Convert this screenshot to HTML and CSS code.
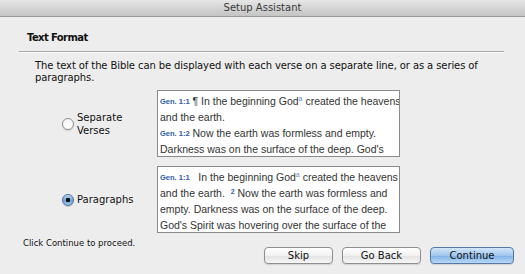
FILE: index.html
```html
<!DOCTYPE html>
<html lang="en">
<head>
    <meta charset="UTF-8">
    <title>Setup Assistant</title>
    <link rel="stylesheet" href="styles.css">
</head>
<body>
    <div class="window">
        <div class="titlebar">Setup Assistant</div>

        <div class="content">
            <h2 class="section-title">Text Format</h2>
            <div class="rule"></div>
            <p class="intro">The text of the Bible can be displayed with each verse on a separate line, or as a series of paragraphs.</p>

            <div class="options">
                <label class="choice">
                    <span class="radio"></span>
                    <span class="choice-label">Separate<br>Verses</span>
                </label>
                <div class="preview">
                    <div class="line"><span class="ref">Gen. 1:1</span> ¶ In the beginning God<sup class="note">a</sup> created the heavens</div>
                    <div class="line">and the earth.</div>
                    <div class="line"><span class="ref">Gen. 1:2</span> Now the earth was formless and empty.</div>
                    <div class="line">Darkness was on the surface of the deep. God's</div>
                </div>

                <label class="choice">
                    <span class="radio checked"></span>
                    <span class="choice-label">Paragraphs</span>
                </label>
                <div class="preview">
                    <div class="line"><span class="ref">Gen. 1:1</span>&nbsp;&nbsp; In the beginning God<sup class="note">a</sup> created the heavens</div>
                    <div class="line">and the earth. &nbsp;<sup class="verse">2</sup> Now the earth was formless and</div>
                    <div class="line">empty. Darkness was on the surface of the deep.</div>
                    <div class="line">God's Spirit was hovering over the surface of the</div>
                </div>
            </div>
        </div>

        <div class="footer">
            <span class="hint">Click Continue to proceed.</span>
            <div class="buttons">
                <button class="btn skip">Skip</button>
                <button class="btn back">Go Back</button>
                <button class="btn primary">Continue</button>
            </div>
        </div>
    </div>
</body>
</html>
```

FILE: styles.css
```css
body {
    margin: 0;
    padding: 0;
    background: #ededed;
    font-family: "DejaVu Sans", "Lucida Grande", sans-serif;
    color: #111;
    overflow: hidden;
}

.window {
    width: 525px;
    height: 274px;
    display: flex;
    flex-direction: column;
    background: #ededed;
}

.titlebar {
    height: 16px;
    line-height: 16px;
    text-align: center;
    font-size: 10px;
    color: #3a3a3a;
    background: linear-gradient(#e6e6e6, #c4c4c4);
    border-bottom: 1px solid #9a9a9a;
}

.content {
    padding: 0 21px 0 19px;
}

.section-title {
    margin: 14px 0 0 8px;
    font-size: 10px;
    font-weight: bold;
    line-height: 14px;
    letter-spacing: -0.6px;
}

.rule {
    margin-top: 6px;
    height: 1px;
    background: #a8a8a8;
    border-bottom: 1px solid #fafafa;
}

.intro {
    margin: 7px 0 0 16px;
    font-size: 10px;
    line-height: 12px;
    letter-spacing: -0.1px;
}

.options {
    display: grid;
    grid-template-columns: 138px 243px;
    row-gap: 9px;
    margin-top: 6px;
}

.choice {
    display: flex;
    align-items: center;
    padding-left: 43px;
    font-size: 10px;
    line-height: 13px;
}

.radio {
    width: 10px;
    height: 10px;
    border-radius: 50%;
    border: 1px solid #8c8c8c;
    background: linear-gradient(#f4f4f4, #fff);
    box-shadow: 0 1px 1px rgba(0, 0, 0, 0.15);
    flex-shrink: 0;
    margin-right: 3px;
}

.radio.checked {
    border-color: #4f6f9c;
    background: radial-gradient(circle at 50% 50%, #111 0, #111 2px, transparent 2.5px),
                linear-gradient(#b9d6f2, #6ea4dc 55%, #9cc6ee);
}

.choice-label {
    color: #111;
}

.preview {
    height: 67px;
    border: 1px solid #8a8a8a;
    background: #fff;
    overflow: hidden;
    padding: 2px 0 0 2px;
    box-sizing: border-box;
    font-family: "Liberation Sans", Arial, sans-serif;
    font-size: 10.5px;
    color: #333;
}

.line {
    height: 16px;
    line-height: 16px;
    white-space: nowrap;
}

.ref {
    font-size: 7.5px;
    font-weight: bold;
    color: #2d5ba6;
    vertical-align: 1px;
}

.note {
    font-size: 7px;
    color: #6a8cc4;
    vertical-align: 4px;
    line-height: 0;
}

.verse {
    font-size: 7px;
    font-weight: bold;
    color: #2d5ba6;
    vertical-align: 3px;
    line-height: 0;
}

.footer {
    display: flex;
    align-items: center;
    justify-content: space-between;
    padding: 0 11px 0 23px;
    margin-top: 8px;
}

.hint {
    font-size: 8.5px;
    color: #111;
    margin-top: -19px;
}

.buttons {
    display: flex;
    gap: 9px;
    margin-top: 6px;
}

.btn {
    height: 17px;
    padding: 0;
    font-family: "DejaVu Sans", "Lucida Grande", sans-serif;
    font-size: 10px;
    color: #111;
    border: 1px solid #8e8e8e;
    border-radius: 4px;
    background: linear-gradient(#ffffff, #f1f1f1 50%, #e2e2e2 51%, #f6f6f6);
    box-shadow: 0 1px 1px rgba(0, 0, 0, 0.12);
}

.skip {
    width: 69px;
}

.back {
    width: 79px;
}

.primary {
    width: 84px;
    border-color: #5a78a6;
    background: linear-gradient(#d4e6f8, #9fc6ee 50%, #7fb0e6 51%, #b7d9f7);
}
```
